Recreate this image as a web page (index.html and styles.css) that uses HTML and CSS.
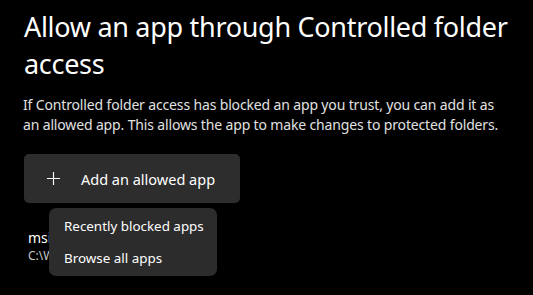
FILE: index.html
```html
<!DOCTYPE html>
<html>
<head>
<meta charset="utf-8">
<link rel="stylesheet" href="styles.css">
</head>
<body>
<main class="page">
  <h1 class="title">Allow an app through Controlled folder access</h1>
  <p class="desc">If Controlled folder access has blocked an app you trust, you can add it as an allowed app. This allows the app to make changes to protected folders.</p>
  <div class="actions">
    <button class="add-btn">
      <svg class="plus" width="16" height="16" viewBox="0 0 16 16"><path d="M8 1v14M1 8h14" stroke="#fff" stroke-width="1.2" fill="none"/></svg>
      <span>Add an allowed app</span>
    </button>
    <div class="menu">
      <div class="menu-item">Recently blocked apps</div>
      <div class="menu-item">Browse all apps</div>
    </div>
  </div>
  <div class="app">
    <div class="app-name">msiexec.exe</div>
    <div class="app-path">C:\Windows\System32\msiexec.exe</div>
  </div>
</main>
</body>
</html>
```
FILE: styles.css
```css
html {
  margin: 0;
  height: 100%;
  background: #000;
}
body {
  margin: 0;
  height: 100%;
  overflow: hidden;
  font-family: "Noto Sans", "Open Sans", sans-serif;
  color: #fff;
}
.page {
  box-sizing: border-box;
  min-height: 100%;
  padding: 8px 20px 0 24px;
  position: relative;
}
.title {
  margin: 0;
  font-weight: 400;
  font-size: 27px;
  line-height: 37px;
  letter-spacing: -0.3px;
}
.desc {
  max-width: 486px;
  margin: 13px 0 0 -1px;
  font-size: 14px;
  line-height: 20px;
  color: #e0e0e0;
  letter-spacing: -0.15px;
}
.actions {
  position: relative;
  margin-top: 19px;
}
.add-btn {
  display: flex;
  align-items: center;
  width: 216px;
  height: 49px;
  padding: 0 0 0 22px;
  background: #2d2d2d;
  border: none;
  border-radius: 5px;
  color: #fff;
  font-family: inherit;
  font-size: 14.5px;
  gap: 20px;
}
.plus { flex: none; width: 15px; height: 15px; }
.menu {
  position: absolute;
  left: 25px;
  top: 54px;
  width: 168px;
  padding: 2px 0;
  box-sizing: border-box;
  height: 68px;
  background: #2c2c2c;
  border-radius: 7px;
  z-index: 2;
}
.menu-item {
  padding: 0 0 0 15px;
  font-size: 13.4px;
  line-height: 32px;
  height: 32px;
  color: #fff;
}
.app {
  width: 180px;
  margin: 26px 0 0 4px;
}
.app-name {
  font-size: 14px;
  line-height: 18px;
}
.app-path {
  font-size: 12px;
  line-height: 18px;
  white-space: nowrap;
  overflow: hidden;
  color: #c8c8c8;
}
```
